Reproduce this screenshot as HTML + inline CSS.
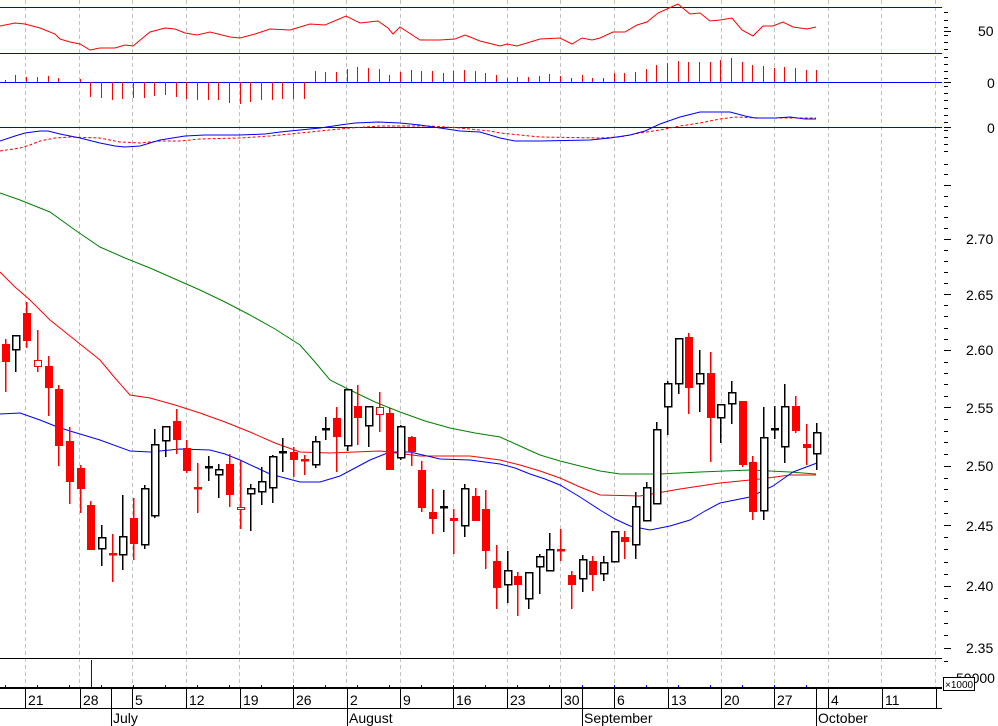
<!DOCTYPE html>
<html><head><meta charset="utf-8"><style>
html,body{margin:0;padding:0;background:#fff;}
svg{display:block}
text{font-family:"Liberation Sans",Arial,sans-serif;fill:#000}
</style></head><body>
<svg id="s" width="998" height="726" viewBox="0 0 998 726" xmlns="http://www.w3.org/2000/svg" shape-rendering="crispEdges">
<g id="grid"></g>
<line x1="0" y1="7.5" x2="942" y2="7.5" stroke="#0000ff"/>
<line x1="0" y1="53.5" x2="942" y2="53.5" stroke="#0000ff"/>
<line x1="0" y1="82.5" x2="942" y2="82.5" stroke="#0000ff"/>
<line x1="0" y1="127.5" x2="942" y2="127.5" stroke="#0000ff"/>
<g id="hist"></g>
<polyline fill="none" stroke="#ff0000" shape-rendering="auto" points="0,26 15,23 25,24 40,28 55,34 60,39 70,42 80,44 90,50 100,48 115,48 125,45 133,46 150,32 165,28 175,29 185,33 197,35 210,32 230,37 240,38 255,34 270,29 290,30 310,24 325,25 346,16 360,23 378,21 388,28 393,34 400,27 420,40 440,40 455,39 465,35 480,41 500,46 507,44 517,46 540,39 560,38 572,44 582,38 592,40 600,38 613,32 625,32 637,25 647,22 658,13 678,4 690,14 700,13 710,21 720,20 732,18 742,30 753,36 763,26 773,26 783,22 793,27 807,29 816,27"/>
<polyline fill="none" stroke="#ff0000" stroke-dasharray="3,2" shape-rendering="auto" points="0,151 20,148 30,145 40,141 55,138 70,137 100,138 120,142 140,143 160,141 180,141 200,139 240,138 270,136 300,133 330,130 350,128 380,126 430,126 460,128 490,131 500,133 540,137 600,138 620,137 640,133 660,130 680,126 700,123 720,119 735,117 760,118 790,118 816,118"/>
<polyline fill="none" stroke="#0000ff" shape-rendering="auto" points="0,141 15,136 25,133 40,131 48,131 60,134 80,138 100,143 115,146 125,147 140,146 160,140 185,136 205,135 240,135 265,134 280,132 300,130 320,128 340,125 355,123 378,122 400,123 420,125 440,128 460,131 480,132 500,138 515,141 540,141 590,140 610,138 630,135 645,131 660,124 680,117 700,112 730,112 745,116 755,118 775,118 790,117 805,119 816,119"/>
<polyline fill="none" stroke="#008000" shape-rendering="auto" points="0,193 20,200 50,212 75,230 100,247 125,258 150,268 175,279 200,290 225,302 250,315 275,329 300,345 315,362 330,380 350,390 375,402 400,412 425,421 450,428 475,433 500,437 520,446 540,455 560,461 580,466 600,471 620,474 660,474 700,472 750,470 790,472 816,474"/>
<polyline fill="none" stroke="#ff0000" shape-rendering="auto" points="0,272 15,287 30,300 50,320 75,340 100,360 115,378 130,395 150,398 175,405 200,413 225,422 250,432 275,443 300,452 330,453 380,451 420,456 470,456 500,460 520,465 540,471 560,478 580,487 600,495 640,496 680,489 720,483 760,479 790,475 816,475"/>
<polyline fill="none" stroke="#0000ff" shape-rendering="auto" points="0,414 20,413 40,420 55,426 70,431 100,440 130,451 150,452 180,449 210,450 225,454 240,460 255,467 270,474 300,482 320,482 340,476 355,468 370,460 390,452 410,452 440,459 470,460 500,464 515,468 530,474 545,479 560,485 580,497 600,510 615,519 630,526 650,530 670,526 690,520 705,511 720,503 750,497 773,486 793,472 817,463"/>
<g id="candles"></g>
<line x1="0" y1="658.5" x2="942" y2="658.5" stroke="#000"/>
<g id="vol"></g>
<line x1="91.5" y1="660" x2="91.5" y2="688" stroke="#0000ff"/>
<line x1="0" y1="688" x2="942" y2="688" stroke="#000" stroke-width="2"/>
<line x1="0" y1="708.5" x2="942" y2="708.5" stroke="#000"/>
<g stroke="#000">
<line x1="25.5" y1="688" x2="25.5" y2="708"/><line x1="80.5" y1="688" x2="80.5" y2="708"/><line x1="132.5" y1="688" x2="132.5" y2="708"/><line x1="186.5" y1="688" x2="186.5" y2="708"/><line x1="240.5" y1="688" x2="240.5" y2="708"/><line x1="293.5" y1="688" x2="293.5" y2="708"/><line x1="400.5" y1="688" x2="400.5" y2="708"/><line x1="453.5" y1="688" x2="453.5" y2="708"/><line x1="507.5" y1="688" x2="507.5" y2="708"/><line x1="561.5" y1="688" x2="561.5" y2="708"/><line x1="614.5" y1="688" x2="614.5" y2="708"/><line x1="668.5" y1="688" x2="668.5" y2="708"/><line x1="721.5" y1="688" x2="721.5" y2="708"/><line x1="774.5" y1="688" x2="774.5" y2="708"/><line x1="828.5" y1="688" x2="828.5" y2="708"/><line x1="882.5" y1="688" x2="882.5" y2="708"/><line x1="936.5" y1="688" x2="936.5" y2="708"/>
<line x1="111.5" y1="688" x2="111.5" y2="726"/><line x1="347.5" y1="688" x2="347.5" y2="726"/><line x1="582.5" y1="688" x2="582.5" y2="726"/><line x1="816.5" y1="688" x2="816.5" y2="726"/>
</g>
<g font-size="14">
<text x="28" y="705">21</text><text x="83" y="705">28</text><text x="135" y="705">5</text><text x="189" y="705">12</text><text x="243" y="705">19</text><text x="296" y="705">26</text><text x="350" y="705">2</text><text x="403" y="705">9</text><text x="456" y="705">16</text><text x="510" y="705">23</text><text x="564" y="705">30</text><text x="617" y="705">6</text><text x="671" y="705">13</text><text x="724" y="705">20</text><text x="777" y="705">27</text><text x="831" y="705">4</text><text x="885" y="705">11</text>
<text x="113" y="723">July</text><text x="349" y="723">August</text><text x="584" y="723">September</text><text x="818" y="723">October</text>
</g>
<g id="ticks" stroke="#000"></g>
<g font-size="14">
<text x="978" y="36">50</text><text x="987" y="88">0</text><text x="987" y="133">0</text>
<text x="966" y="244">2.70</text><text x="966" y="300">2.65</text><text x="966" y="355">2.60</text><text x="966" y="413">2.55</text><text x="966" y="471">2.50</text><text x="966" y="531">2.45</text><text x="966" y="591">2.40</text><text x="966" y="653">2.35</text>
<text x="956" y="683">50000</text>
</g>
<rect x="943.5" y="677.5" width="31" height="13" fill="#fff" stroke="#000"/>
<text x="945" y="688" font-size="10">×1000</text>
</svg>
<script>
var N="http://www.w3.org/2000/svg";
function el(p,t,a){var e=document.createElementNS(N,t);for(var k in a)e.setAttribute(k,a[k]);document.getElementById(p).appendChild(e);return e;}
for(var k=0;k<18;k++){var x=Math.round(25.3+k*53.5)+0.5;el("grid","line",{x1:x,y1:0,x2:x,y2:688,stroke:"#c0c0c0","stroke-dasharray":"4,3"});}
var hv=[80,75,77,77,76,78,82,79,97,98,100,99,98,98,96,95,97,99,100,100,100,103,104,102,100,100,99,99,99,71,72,72,69,67,68,69,75,72,70,71,71,73,71,70,71,73,75,78,77,77,76,74,76,78,75,78,78,73,73,72,69,65,63,61,62,62,62,60,58,62,65,66,68,67,68,70,70];
var C=[["r",344,362,339,392],["w",335,350,335,372],["r",313,341,302,348],["h",360,367,330,372],["r",366,388,356,416],["r",389,446,385,466],["r",441,482,427,504],["r",468,489,465,513],["r",505,550,501,550],["w",537,549,525,566],["d",554,554,534,582],["w",536,555,495,570],["r",518,544,498,560],["w",488,545,485,549],["w",444,516,429,518],["w",426,441,426,457],["r",421,440,409,454],["r",448,471,440,473],["d",488,488,463,513],["k",467,467,456,481],["w",469,475,464,498],["r",464,495,454,507],["h",507,510,461,529],["w",488,494,484,531],["w",481,492,467,505],["w",456,488,455,503],["k",452,452,438,472],["r",452,460,447,477],["d",460,460,455,475],["w",441,465,436,468],["k",429,429,417,440],["r",418,437,407,472],["w",389,446,389,451],["r",406,418,385,445],["w",406,426,406,447],["h",407,415,392,432],["r",413,470,408,470],["w",426,458,425,460],["r",437,452,436,466],["r",470,508,461,512],["r",512,519,489,534],["k",507,507,490,532],["r",518,521,509,554],["w",488,526,484,537],["r",496,521,488,521],["r",509,551,490,569],["r",561,588,545,609],["w",570,585,551,603],["r",576,585,572,616],["w",572,599,572,609],["w",556,567,554,594],["w",549,571,533,571],["d",550,550,529,561],["r",575,585,571,609],["w",559,579,555,592],["r",561,575,556,591],["w",562,574,556,581],["w",531,562,531,562],["r",537,542,531,559],["w",506,545,492,559],["w",487,521,482,521],["w",429,504,422,504],["w",383,407,381,435],["w",338,384,338,394],["r",337,388,333,414],["w",373,384,350,412],["r",373,418,352,462],["w",404,418,404,443],["w",392,404,381,424],["r",401,465,401,467],["r",462,512,456,520],["w",437,511,407,520],["k",429,429,406,439],["w",406,447,384,463],["r",406,431,396,433],["r",444,448,424,465],["w",432,454,423,470]];
for(var i=0;i<C.length;i++){
 var c=C[i],x=Math.round(4.8+i*10.68),t=c[0];
 var col=(t=="w"||t=="k")?"#000":"#ff0000";
 el("hist","line",{x1:x+0.5,y1:82,x2:x+0.5,y2:hv[i],stroke:"#ff0000"});
 el("candles","line",{x1:x+0.5,y1:c[3],x2:x+0.5,y2:c[4],stroke:col,"stroke-width":1.5});
 if(t=="r") el("candles","rect",{x:x-3,y:c[1],width:8,height:Math.max(2,c[2]-c[1]),fill:"#ff0000"});
 else if(t=="w") el("candles","rect",{x:x-3+0.5,y:c[1]+0.5,width:7,height:Math.max(2,c[2]-c[1]-1),fill:"#fff",stroke:"#000","stroke-width":1.5});
 else if(t=="h") el("candles","rect",{x:x-3+0.5,y:c[1]+0.5,width:7,height:Math.max(2,c[2]-c[1]-1),fill:"#fff",stroke:"#ff0000","stroke-width":1});
 else el("candles","rect",{x:x-3,y:c[1]-1,width:8,height:2.5,fill:col});
 if(i%3==0) el("vol","line",{x1:x+0.5,y1:685,x2:x+0.5,y2:688,stroke:"#0000ff"});
}
function ly(p){return 3165.1-2946*Math.log(p);}
for(var p=2.34;p<=2.771;p+=0.01){var y=Math.round(ly(p))+0.5;var maj=Math.abs(Math.round(p*100)%5)==0;el("ticks","line",{x1:944,y1:y,x2:maj?951:948,y2:y});}
[12,20,27,35,42,49,57,64,71,78,86,93,100,108,115,122,130,137,144,151].forEach(function(y){el("ticks","line",{x1:944,y1:y+0.5,x2:948,y2:y+0.5});});
[31,82,127].forEach(function(y){el("ticks","line",{x1:944,y1:y+0.5,x2:951,y2:y+0.5});});
</script>
</body></html>
